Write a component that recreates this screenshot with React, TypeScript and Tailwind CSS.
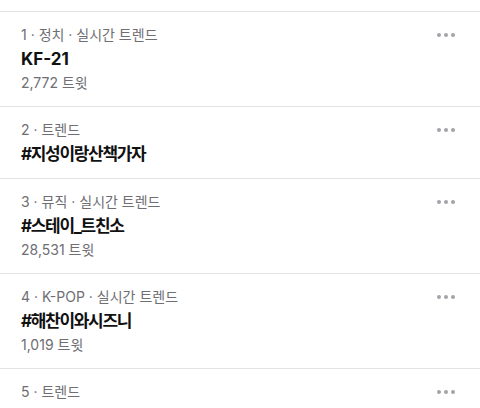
import React from 'react'

const trends = [
  { rank: 1, meta: '정치 · 실시간 트렌드', title: 'KF-21', count: '2,772 트윗' },
  { rank: 2, meta: '트렌드', title: '#지성이랑산책가자', ko: true },
  { rank: 3, meta: '뮤직 · 실시간 트렌드', title: '#스테이_트친소', count: '28,531 트윗', ko: true },
  { rank: 4, meta: 'K-POP · 실시간 트렌드', title: '#해찬이와시즈니', count: '1,019 트윗', ko: true },
  { rank: 5, meta: '트렌드', title: '' },
]

const Dots = () => (
  <div className="flex items-center gap-[3px] self-start pt-[8px]">
    <span className="h-[4px] w-[4px] rounded-full bg-[#a3a3a8]" />
    <span className="h-[4px] w-[4px] rounded-full bg-[#a3a3a8]" />
    <span className="h-[4px] w-[4px] rounded-full bg-[#a3a3a8]" />
  </div>
)

const TrendRow = ({ rank, meta, title, count, ko }) => (
  <div className="flex justify-between border-b border-[#e3e3e6] pl-[21px] pr-[25px] pt-[13px] pb-[12px]">
    <div className="flex flex-col">
      <div className="text-[14px] leading-[20px] text-[#6e6e73]">
        {rank} · {meta}
      </div>
      {title && (
        <div
          className={
            ko
              ? 'mt-[2px] text-[17px] font-bold leading-[24px] tracking-[-1.3px] text-[#111]'
              : 'mt-[2px] text-[17px] font-bold leading-[24px] text-[#111]'
          }
        >
          {title}
        </div>
      )}
      {count && <div className="mt-[2px] mb-[1px] text-[14px] leading-[20px] text-[#6e6e73]">{count}</div>}
    </div>
    <Dots />
  </div>
)

export default function App() {
  return (
    <div
      className="h-[408px] w-[480px] overflow-hidden bg-white pt-[11px]"
      style={{ fontFamily: 'Inter, "Noto Sans CJK KR", sans-serif' }}
    >
      <div className="border-t border-[#e3e3e6]">
        {trends.map((t) => (
          <TrendRow key={t.rank} {...t} />
        ))}
      </div>
    </div>
  )
}
